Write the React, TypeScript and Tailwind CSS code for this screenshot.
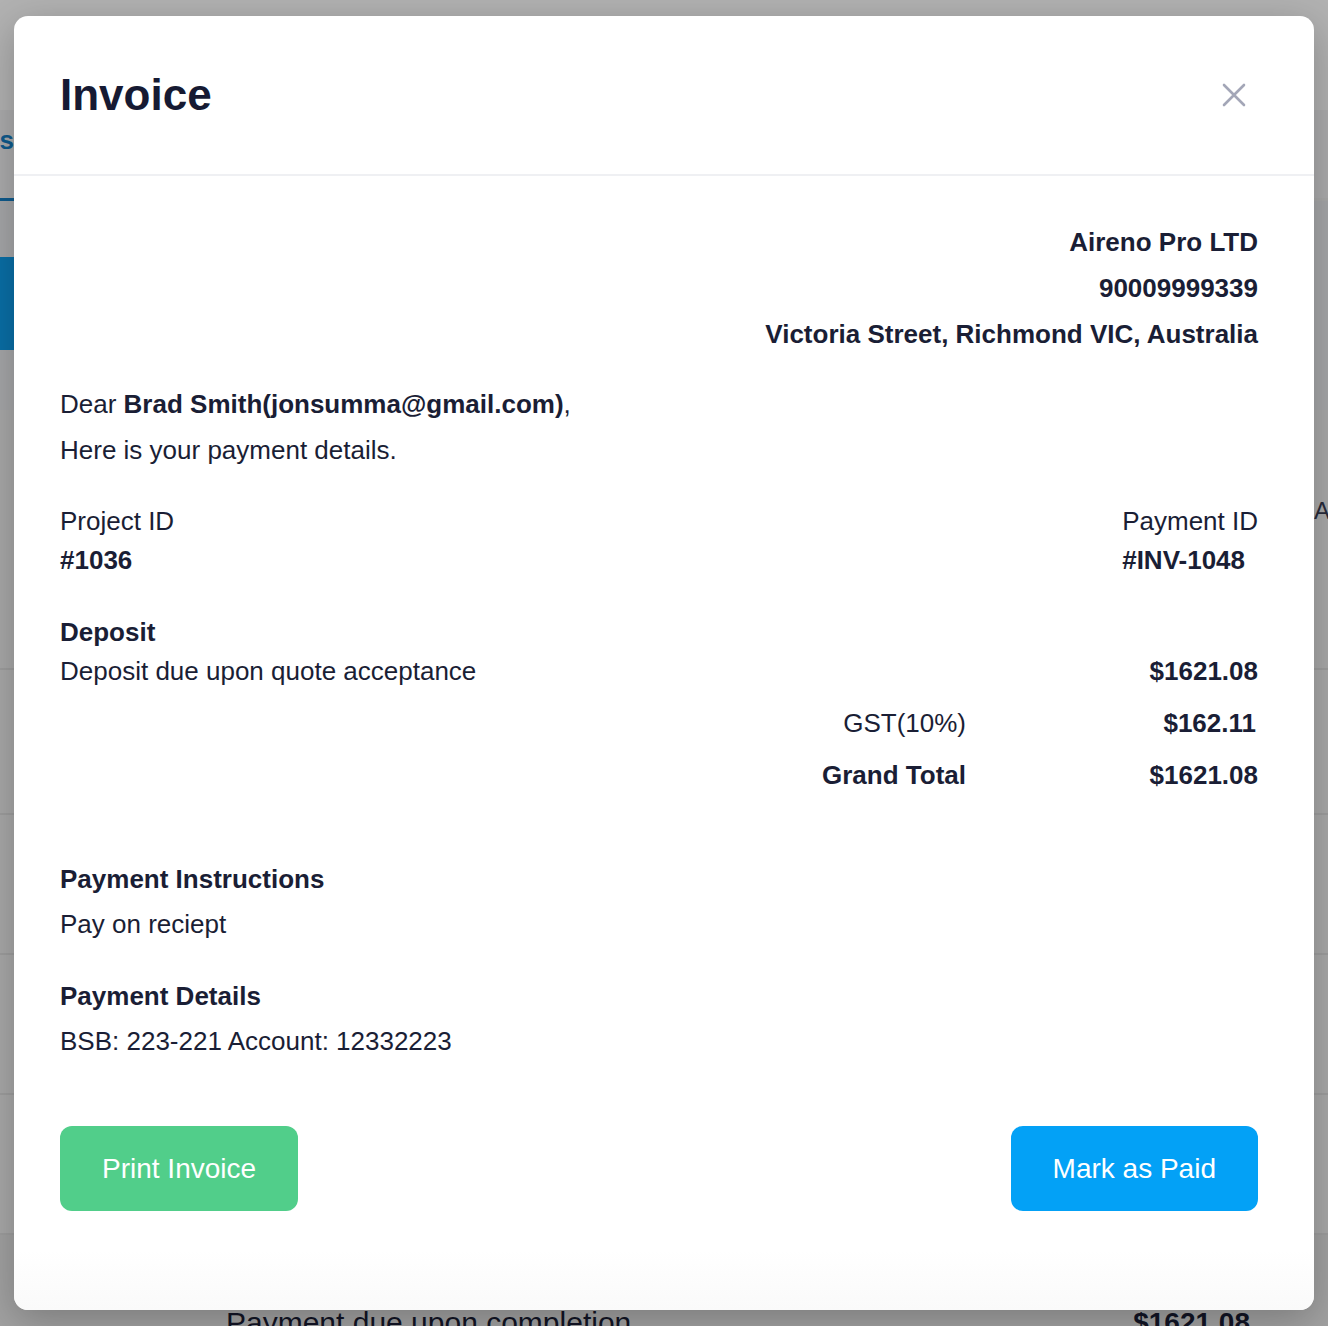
const company = ["Aireno Pro LTD", "90009999339", "Victoria Street, Richmond VIC, Australia"];

function CloseIcon() {
  return (
    <svg width="24" height="24" viewBox="0 0 24 24" fill="none">
      <path d="M2 2 L22 22 M22 2 L2 22" stroke="#a3a6b7" strokeWidth="2.6" strokeLinecap="round" />
    </svg>
  );
}

function BackgroundPage() {
  return (
    <div className="absolute inset-0 flex flex-col bg-[#f3f3f3] text-[#1a1e35]">
      <div className="h-[110px] shrink-0 bg-white" />
      <div className="h-[88px] shrink-0 bg-[#f7f7f8] flex items-start pt-[15px]">
        <div className="w-[14px] flex justify-end leading-[30px]">
          <span className="whitespace-nowrap text-[26px] font-bold text-[#1683cb]">Payments</span>
        </div>
      </div>
      <div className="h-[3px] w-[120px] shrink-0 bg-[#1683cb]" />
      <div className="h-[209px] shrink-0 bg-[#eeeff2] pt-[56px]">
        <div className="h-[93px] w-[200px] bg-[#0e9ff0] rounded-r-lg" />
      </div>
      <div className="h-[260px] shrink-0 border-b-2 border-[#e2e2e2] flex justify-end pt-[83px]">
        <span className="text-[24px] w-[14px] overflow-hidden text-[#3a3e55]">A</span>
      </div>
      <div className="h-[145px] shrink-0 border-b-2 border-[#e2e2e2]" />
      <div className="h-[140px] shrink-0 border-b-2 border-[#e2e2e2]" />
      <div className="h-[140px] shrink-0 border-b-2 border-[#e2e2e2]" />
      <div className="h-[140px] shrink-0 border-b-2 border-[#e2e2e2]" />
      <div className="h-[140px] shrink-0 bg-[#e8e8e8] flex justify-between items-start pt-[70px] pl-[226px] pr-[78px]">
        <span className="text-[30px] leading-[36px]">Payment due upon completion</span>
        <span className="text-[28px] leading-[36px] font-bold">$1621.08</span>
      </div>
    </div>
  );
}

export default function App() {
  return (
    <div className="relative w-full h-[1326px] overflow-hidden font-['Liberation_Sans',Arial,sans-serif]">
      <BackgroundPage />
      <div className="absolute inset-0 bg-black/30" />

      <div className="absolute left-[14px] top-[16px] w-[1300px] h-[1294px] bg-white rounded-[14px] shadow-[0_10px_40px_rgba(0,0,0,0.25)] overflow-hidden text-[#1a1e35]">
        <div className="h-[160px] flex items-center justify-between pl-[46px] pr-[68px] border-b-2 border-[#eff0f3]">
          <h1 className="text-[44px] font-bold text-[#161a33]">Invoice</h1>
          <CloseIcon />
        </div>

        <div className="pl-[46px] pr-[56px] pt-[43px] text-[26px]">
          <div className="flex flex-col items-end font-bold leading-[46px]">
            {company.map((line) => (
              <div key={line}>{line}</div>
            ))}
          </div>

          <div className="mt-[24px] leading-[46px]">
            <div>
              Dear <span className="font-bold">Brad Smith(jonsumma@gmail.com)</span>,
            </div>
            <div>Here is your payment details.</div>
          </div>

          <div className="mt-[29px] flex justify-between leading-[39px]">
            <div>
              <div>Project ID</div>
              <div className="font-bold">#1036</div>
            </div>
            <div>
              <div>Payment ID</div>
              <div className="font-bold">#INV-1048</div>
            </div>
          </div>

          <div className="mt-[33px] leading-[39px]">
            <div className="font-bold">Deposit</div>
            <div className="flex justify-between">
              <span>Deposit due upon quote acceptance</span>
              <span className="font-bold">$1621.08</span>
            </div>
          </div>

          <div className="mt-[6px] leading-[52px]">
            <div className="flex justify-end">
              <span>GST(10%)</span>
              <span className="w-[292px] text-right font-bold pr-[2px]">$162.11</span>
            </div>
            <div className="flex justify-end font-bold">
              <span>Grand Total</span>
              <span className="w-[292px] text-right">$1621.08</span>
            </div>
          </div>

          <div className="mt-[56px] leading-[45px]">
            <div className="font-bold">Payment Instructions</div>
            <div>Pay on reciept</div>
          </div>

          <div className="mt-[27px] leading-[45px]">
            <div className="font-bold">Payment Details</div>
            <div>BSB: 223-221 Account: 12332223</div>
          </div>

          <div className="mt-[62px] flex justify-between">
            <button className="h-[85px] px-[42px] rounded-[12px] bg-[#51ce8a] text-white text-[28px]">
              Print Invoice
            </button>
            <button className="h-[85px] px-[42px] rounded-[12px] bg-[#03a1f6] text-white text-[28px]">
              Mark as Paid
            </button>
          </div>
        </div>

        <div className="absolute left-0 right-0 bottom-0 h-[60px] bg-gradient-to-b from-white/0 to-[#fafafa]" />
      </div>
    </div>
  );
}
